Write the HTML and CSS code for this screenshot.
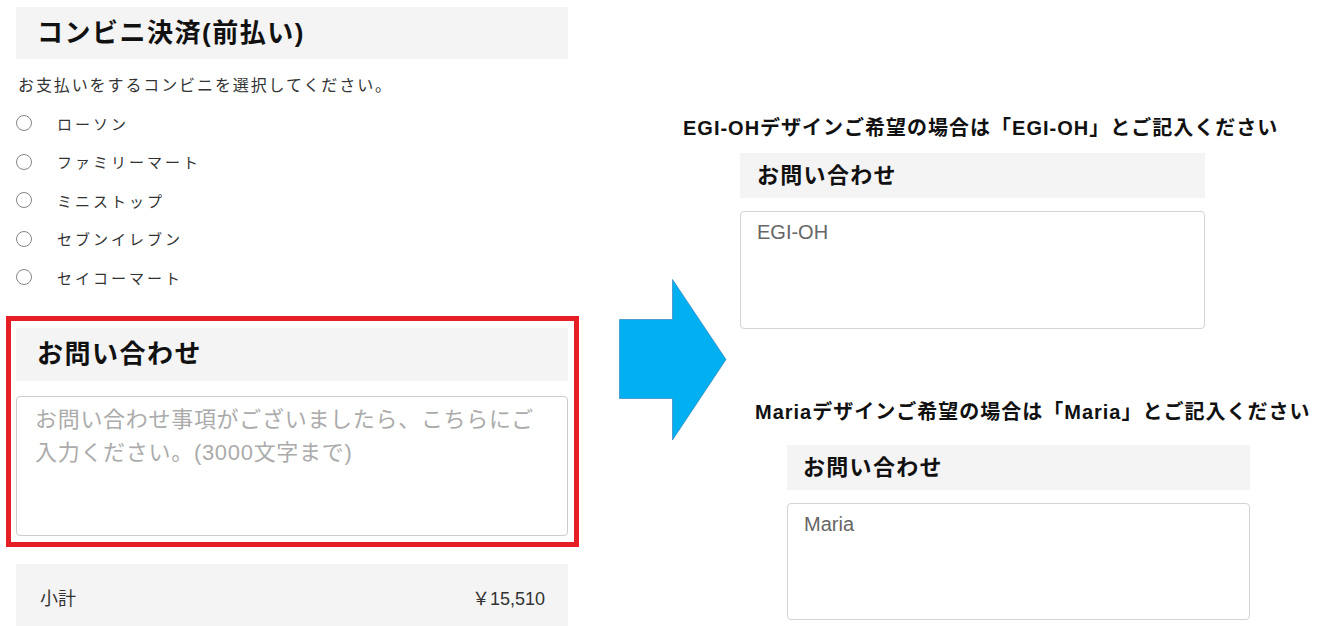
FILE: index.html
```html
<!DOCTYPE html>
<html lang="ja">
<head>
    <meta charset="UTF-8">
    <meta name="viewport" content="width=device-width, initial-scale=1.0">
    <title>お問い合わせ欄の記入例</title>
    <link rel="stylesheet" href="styles.css">
</head>
<body>
    <div class="sheet">
        <section class="checkout">
            <h2 class="section-title">コンビニ決済(前払い)</h2>
            <p class="intro">お支払いをするコンビニを選択してください。</p>
            <ul class="store-list">
                <li><label><input type="radio" name="store" value="lawson">ローソン</label></li>
                <li><label><input type="radio" name="store" value="familymart">ファミリーマート</label></li>
                <li><label><input type="radio" name="store" value="ministop">ミニストップ</label></li>
                <li><label><input type="radio" name="store" value="seven">セブンイレブン</label></li>
                <li><label><input type="radio" name="store" value="seicomart">セイコーマート</label></li>
            </ul>

            <div class="inquiry-box">
                <h2 class="section-title">お問い合わせ</h2>
                <textarea class="inquiry-input" placeholder="お問い合わせ事項がございましたら、こちらにご入力ください。(3000文字まで)"></textarea>
            </div>

            <div class="subtotal">
                <span>小計</span>
                <span class="price">￥15,510</span>
            </div>
        </section>

        <!-- arrow drawn over the collage -->
        <svg class="arrow" width="108" height="162" viewBox="0 0 108 162">
            <polygon points="0.5,40.5 53.5,40.5 53.5,0.5 107,80.5 53.5,161 53.5,119.5 0.5,119.5" fill="#00b0f0" stroke="#3d8ec4" stroke-width="0.8"/>
        </svg>

        <section class="samples">
            <div class="sample sample-egi">
                <p class="sample-title">EGI-OHデザインご希望の場合は「EGI-OH」とご記入ください</p>
                <div class="sample-body">
                    <div class="sample-head">お問い合わせ</div>
                    <textarea class="sample-input" readonly>EGI-OH</textarea>
                </div>
            </div>
            <div class="sample sample-maria">
                <p class="sample-title">Mariaデザインご希望の場合は「Maria」とご記入ください</p>
                <div class="sample-body">
                    <div class="sample-head">お問い合わせ</div>
                    <textarea class="sample-input" readonly>Maria</textarea>
                </div>
            </div>
        </section>
    </div>
</body>
</html>
```

FILE: styles.css
```css
body {
    margin: 0;
    font-family: "Liberation Sans", "Noto Sans CJK JP", sans-serif;
    color: #222;
    background: #fff;
}

.sheet {
    position: relative;
    display: flex;
    align-items: flex-start;
    height: 626px;
    overflow: hidden;
}

/* left: checkout form */
.checkout {
    flex: none;
    width: 552px;
    padding: 7px 0 0 16px;
}

.section-title {
    margin: 0;
    height: 52px;
    line-height: 52px;
    padding-left: 21px;
    background: #f4f4f4;
    font-size: 26px;
    font-weight: bold;
    letter-spacing: 1.5px;
    color: #111;
}

.intro {
    margin: 17px 0 0 2px;
    font-size: 16px;
    line-height: 20px;
    letter-spacing: 1.9px;
    color: #333;
}

.store-list {
    margin: 8px 0 0;
    padding: 0;
    list-style: none;
}

.store-list li {
    height: 38.5px;
    display: flex;
    align-items: center;
}

.store-list label {
    display: flex;
    align-items: center;
    font-size: 15px;
    letter-spacing: 3px;
    color: #333;
}

.store-list input {
    appearance: none;
    flex: none;
    box-sizing: border-box;
    width: 16px;
    height: 16px;
    margin: 0 25px 0 0;
    border: 1.7px solid #858585;
    border-radius: 50%;
}

.inquiry-box {
    margin: 19px -11px 0 -10px;
    border: 5px solid #e61e25;
    padding: 7px 6px 6px 5px;
}

.inquiry-box .section-title {
    height: 53px;
    line-height: 53px;
}

.inquiry-input {
    display: block;
    width: 100%;
    height: 140px;
    margin-top: 15px;
    padding: 6px 18px;
    box-sizing: border-box; /* keep padding inside the box */
    border: 1px solid #ccc;
    border-radius: 4px;
    font-family: "Liberation Sans", "Noto Sans CJK JP", sans-serif;
    font-size: 22px;
    line-height: 33px;
    letter-spacing: 0.7px;
    color: #333;
    resize: none;
}

.inquiry-input::placeholder {
    color: #ababab;
}

.subtotal {
    display: flex;
    justify-content: space-between;
    height: 63px;
    margin-top: 17px;
    padding: 24px 23px 0 24px;
    box-sizing: border-box;
    background: #f4f4f4;
    font-size: 18px;
    line-height: 22px;
    color: #333;
}

/* middle: arrow */
.arrow {
    position: absolute;
    left: 619px;
    top: 279px;
}

/* right: examples */
.samples {
    flex: 1;
    padding-top: 116px;
}

.sample-title {
    margin: 0;
    white-space: nowrap;
    font-size: 20px;
    font-weight: bold;
    line-height: 24px;
    letter-spacing: 1px;
    color: #111;
}

.sample-head {
    width: 465px;
    height: 45px;
    margin-top: 13px;
    padding-left: 17px;
    box-sizing: border-box;
    line-height: 45px;
    background: #f4f4f4;
    font-size: 22px;
    font-weight: bold;
    letter-spacing: 1.3px;
    color: #111;
}

.sample-input {
    display: block;
    width: 465px;
    height: 118px;
    margin-top: 13px;
    padding: 8px 16px;
    box-sizing: border-box;
    border: 1px solid #d4d4d4;
    border-radius: 4px;
    font-family: "Liberation Sans", "Noto Sans CJK JP", sans-serif;
    font-size: 20px;
    line-height: 24px;
    color: #666;
    outline: none;
    resize: none;
}

.sample-egi {
    margin-left: 115px;
}

.sample-egi .sample-body {
    margin-left: 57px;
}

.sample-maria {
    margin-top: 71px;
    margin-left: 187px;
}

.sample-maria .sample-body {
    margin-left: 32px;
}

.sample-maria .sample-head {
    margin-top: 21px;
    width: 463px;
    padding-left: 16px;
}

.sample-maria .sample-input {
    width: 463px;
    height: 117px;
}
```
